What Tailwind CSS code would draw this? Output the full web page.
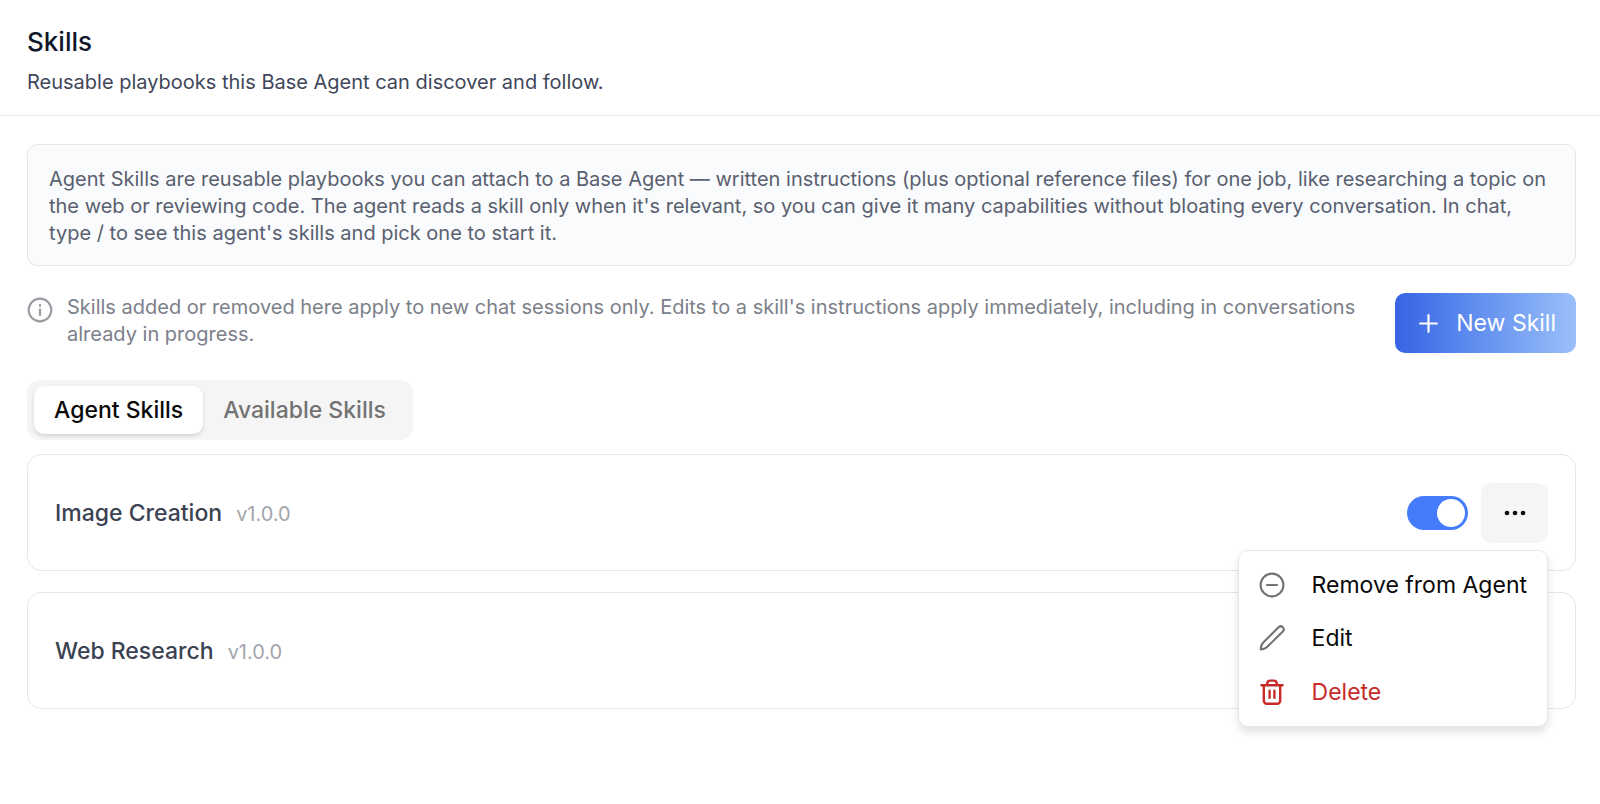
<!DOCTYPE html>
<html lang="en">
<head>
    <meta charset="UTF-8">
    <meta name="viewport" content="width=device-width, initial-scale=1.0">
    <title>Skills</title>
    <script src="https://cdn.jsdelivr.net/npm/@tailwindcss/browser@4"></script>
</head>
<body class="min-h-screen bg-white font-['Inter',sans-serif] text-gray-900">
    <header class="border-b border-[#e5e6e8] px-[27px] pt-6 pb-[19px]">
        <h1 class="text-[26px] leading-9 font-medium text-[#0f172a]">Skills</h1>
        <p class="mt-[9px] text-[20px] leading-[27px] text-[#41475a]">Reusable playbooks this Base Agent can discover and follow.</p>
    </header>

    <main class="px-[27px] pt-7 pr-6">
        <!-- Intro -->
        <div class="rounded-[10px] border border-[#e5e6e8] bg-[#f9fbfc] px-[21px] pt-[21px] pb-[18px] text-[20px] leading-[27px] text-[#596070]">
            <p>Agent Skills are reusable playbooks you can attach to a Base Agent — written instructions (plus optional reference files) for one job, like researching a topic on the web or reviewing code. The agent reads a skill only when it's relevant, so you can give it many capabilities without bloating every conversation. In chat, type / to see this agent's skills and pick one to start it.</p>
        </div>

        <!-- Notice and new skill button -->
        <div class="mt-[27px] flex items-start justify-between gap-8">
            <div class="flex items-start gap-[14px] text-[#7c808a]">
                <svg class="mt-1 size-[26px] shrink-0 text-[#9a9ca3]" viewBox="0 0 26 26" fill="none" stroke="currentColor" stroke-width="2.2" stroke-linecap="round">
                    <circle cx="13" cy="13" r="11.3"/>
                    <path d="M13 12.5v5.5"/>
                    <path d="M13 8.3v.1" stroke-width="2.6"/>
                </svg>
                <p class="pt-px text-[20px] leading-[27px]">Skills added or removed here apply to new chat sessions only. Edits to a skill's instructions apply immediately, including in conversations already in progress.</p>
            </div>
            <button type="button" class="flex h-[60px] shrink-0 items-center gap-[18px] rounded-[10px] bg-linear-to-r from-[#3763e4] to-[#9abff9] pr-5 pl-6 text-[23px] leading-8 text-white">
                <svg class="size-[19px]" viewBox="0 0 19 19" fill="none" stroke="currentColor" stroke-width="2.2" stroke-linecap="round">
                    <path d="M9.5 1.2v16.6M1.2 9.5h16.6"/>
                </svg>
                New Skill
            </button>
        </div>

        <!-- Tabs -->
        <div class="mt-[27px] flex h-[60px] w-fit items-center rounded-[13px] bg-[#f5f5f5] px-[7px] text-[23px] leading-8 font-medium" role="tablist">
            <button type="button" role="tab" aria-selected="true" class="h-12 rounded-[10px] bg-white px-5 text-[#0a0a0a] shadow-[0_2px_4px_rgba(0,0,0,0.14)]">Agent Skills</button>
            <button type="button" role="tab" aria-selected="false" class="h-12 rounded-[10px] px-5 text-[#737373]">Available Skills</button>
        </div>

        <!-- Skill list -->
        <ul class="mt-[14px] flex flex-col gap-[21px]">
            <li class="relative z-10 flex h-[117px] items-center justify-between rounded-[14px] border border-[#e5e6e8] px-[27px]">
                <div class="flex items-baseline gap-[14px]">
                    <h2 class="text-[23px] leading-8 font-medium text-[#3b4252]">Image Creation</h2>
                    <span class="text-[20px] text-[#a3a5ab]">v1.0.0</span>
                </div>
                <div class="relative flex items-center gap-[13px]">
                    <input type="checkbox" role="switch" checked aria-label="Enable Image Creation" class="h-[34px] w-[61px] appearance-none rounded-full bg-gray-300 p-[3px] before:block before:size-7 before:rounded-full before:bg-white checked:bg-[#447cfb] checked:before:ml-[27px]">
                    <button type="button" aria-label="More actions" aria-expanded="true" class="flex h-[60px] w-[67px] items-center justify-center rounded-[10px] bg-[#f5f5f5] text-[#0a0a0a]">
                        <svg class="h-6 w-6" viewBox="0 0 24 24" fill="currentColor">
                            <circle cx="4" cy="12" r="2.3"/>
                            <circle cx="12" cy="12" r="2.3"/>
                            <circle cx="20" cy="12" r="2.3"/>
                        </svg>
                    </button>
                    <!-- Actions menu -->
                    <div role="menu" class="absolute top-full right-0 mt-[7px] w-max rounded-[10px] border border-[#e5e6e8] bg-white px-[7px] py-[7px] text-[23px] leading-8 text-[#0a0a0a] shadow-[0_5px_8px_rgba(0,0,0,0.12)]">
                        <button type="button" role="menuitem" class="flex h-[54px] w-full items-center gap-[27px] px-[13px]">
                            <svg class="size-[26px] text-[#737373]" viewBox="0 0 26 26" fill="none" stroke="currentColor" stroke-width="2.1" stroke-linecap="round">
                                <circle cx="13" cy="13" r="11.4"/>
                                <path d="M8 13h10"/>
                            </svg>
                            Remove from Agent
                        </button>
                        <button type="button" role="menuitem" class="flex h-[53px] w-full items-center gap-[27px] px-[13px]">
                            <svg class="size-[26px] text-[#737373]" viewBox="0 0 26 26" fill="none" stroke="currentColor" stroke-width="2.1" stroke-linejoin="round" stroke-linecap="round">
                                <path d="M19.6 2.2a2.9 2.9 0 0 1 4.2 4.2L8.6 21.5Q6.8 23.3 4.4 23.9L1.7 24.4 2.1 21.6Q2.7 19.1 4.5 17.3Z"/>
                            </svg>
                            Edit
                        </button>
                        <button type="button" role="menuitem" class="flex h-[54px] w-full items-center gap-[27px] px-[13px] text-[#c92a2a]">
                            <svg class="size-[26px]" viewBox="0 0 26 26" fill="none" stroke="currentColor" stroke-width="2.4" stroke-linejoin="round" stroke-linecap="round">
                                <path d="M2.5 6.3h21"/>
                                <path d="M4.8 6.3v15.4a3 3 0 0 0 3 3h10.4a3 3 0 0 0 3-3V6.3"/>
                                <path d="M8.3 6V4.4a2.8 2.8 0 0 1 2.8-2.8h3.8a2.8 2.8 0 0 1 2.8 2.8V6"/>
                                <path d="M10.6 11.8v7M15.4 11.8v7"/>
                            </svg>
                            Delete
                        </button>
                    </div>
                </div>
            </li>
            <li class="flex h-[117px] items-center justify-between rounded-[14px] border border-[#e5e6e8] px-[27px]">
                <div class="flex items-baseline gap-[14px]">
                    <h2 class="text-[23px] leading-8 font-medium text-[#3b4252]">Web Research</h2>
                    <span class="text-[20px] text-[#a3a5ab]">v1.0.0</span>
                </div>
                <div class="flex items-center gap-[13px]">
                    <input type="checkbox" role="switch" checked aria-label="Enable Web Research" class="h-[34px] w-[61px] appearance-none rounded-full bg-gray-300 p-[3px] before:block before:size-7 before:rounded-full before:bg-white checked:bg-[#447cfb] checked:before:ml-[27px]">
                    <button type="button" aria-label="More actions" class="flex h-[60px] w-[67px] items-center justify-center rounded-[10px] text-[#0a0a0a]">
                        <svg class="h-6 w-6" viewBox="0 0 24 24" fill="currentColor">
                            <circle cx="4" cy="12" r="2.3"/>
                            <circle cx="12" cy="12" r="2.3"/>
                            <circle cx="20" cy="12" r="2.3"/>
                        </svg>
                    </button>
                </div>
            </li>
        </ul>
    </main>
</body>
</html>
